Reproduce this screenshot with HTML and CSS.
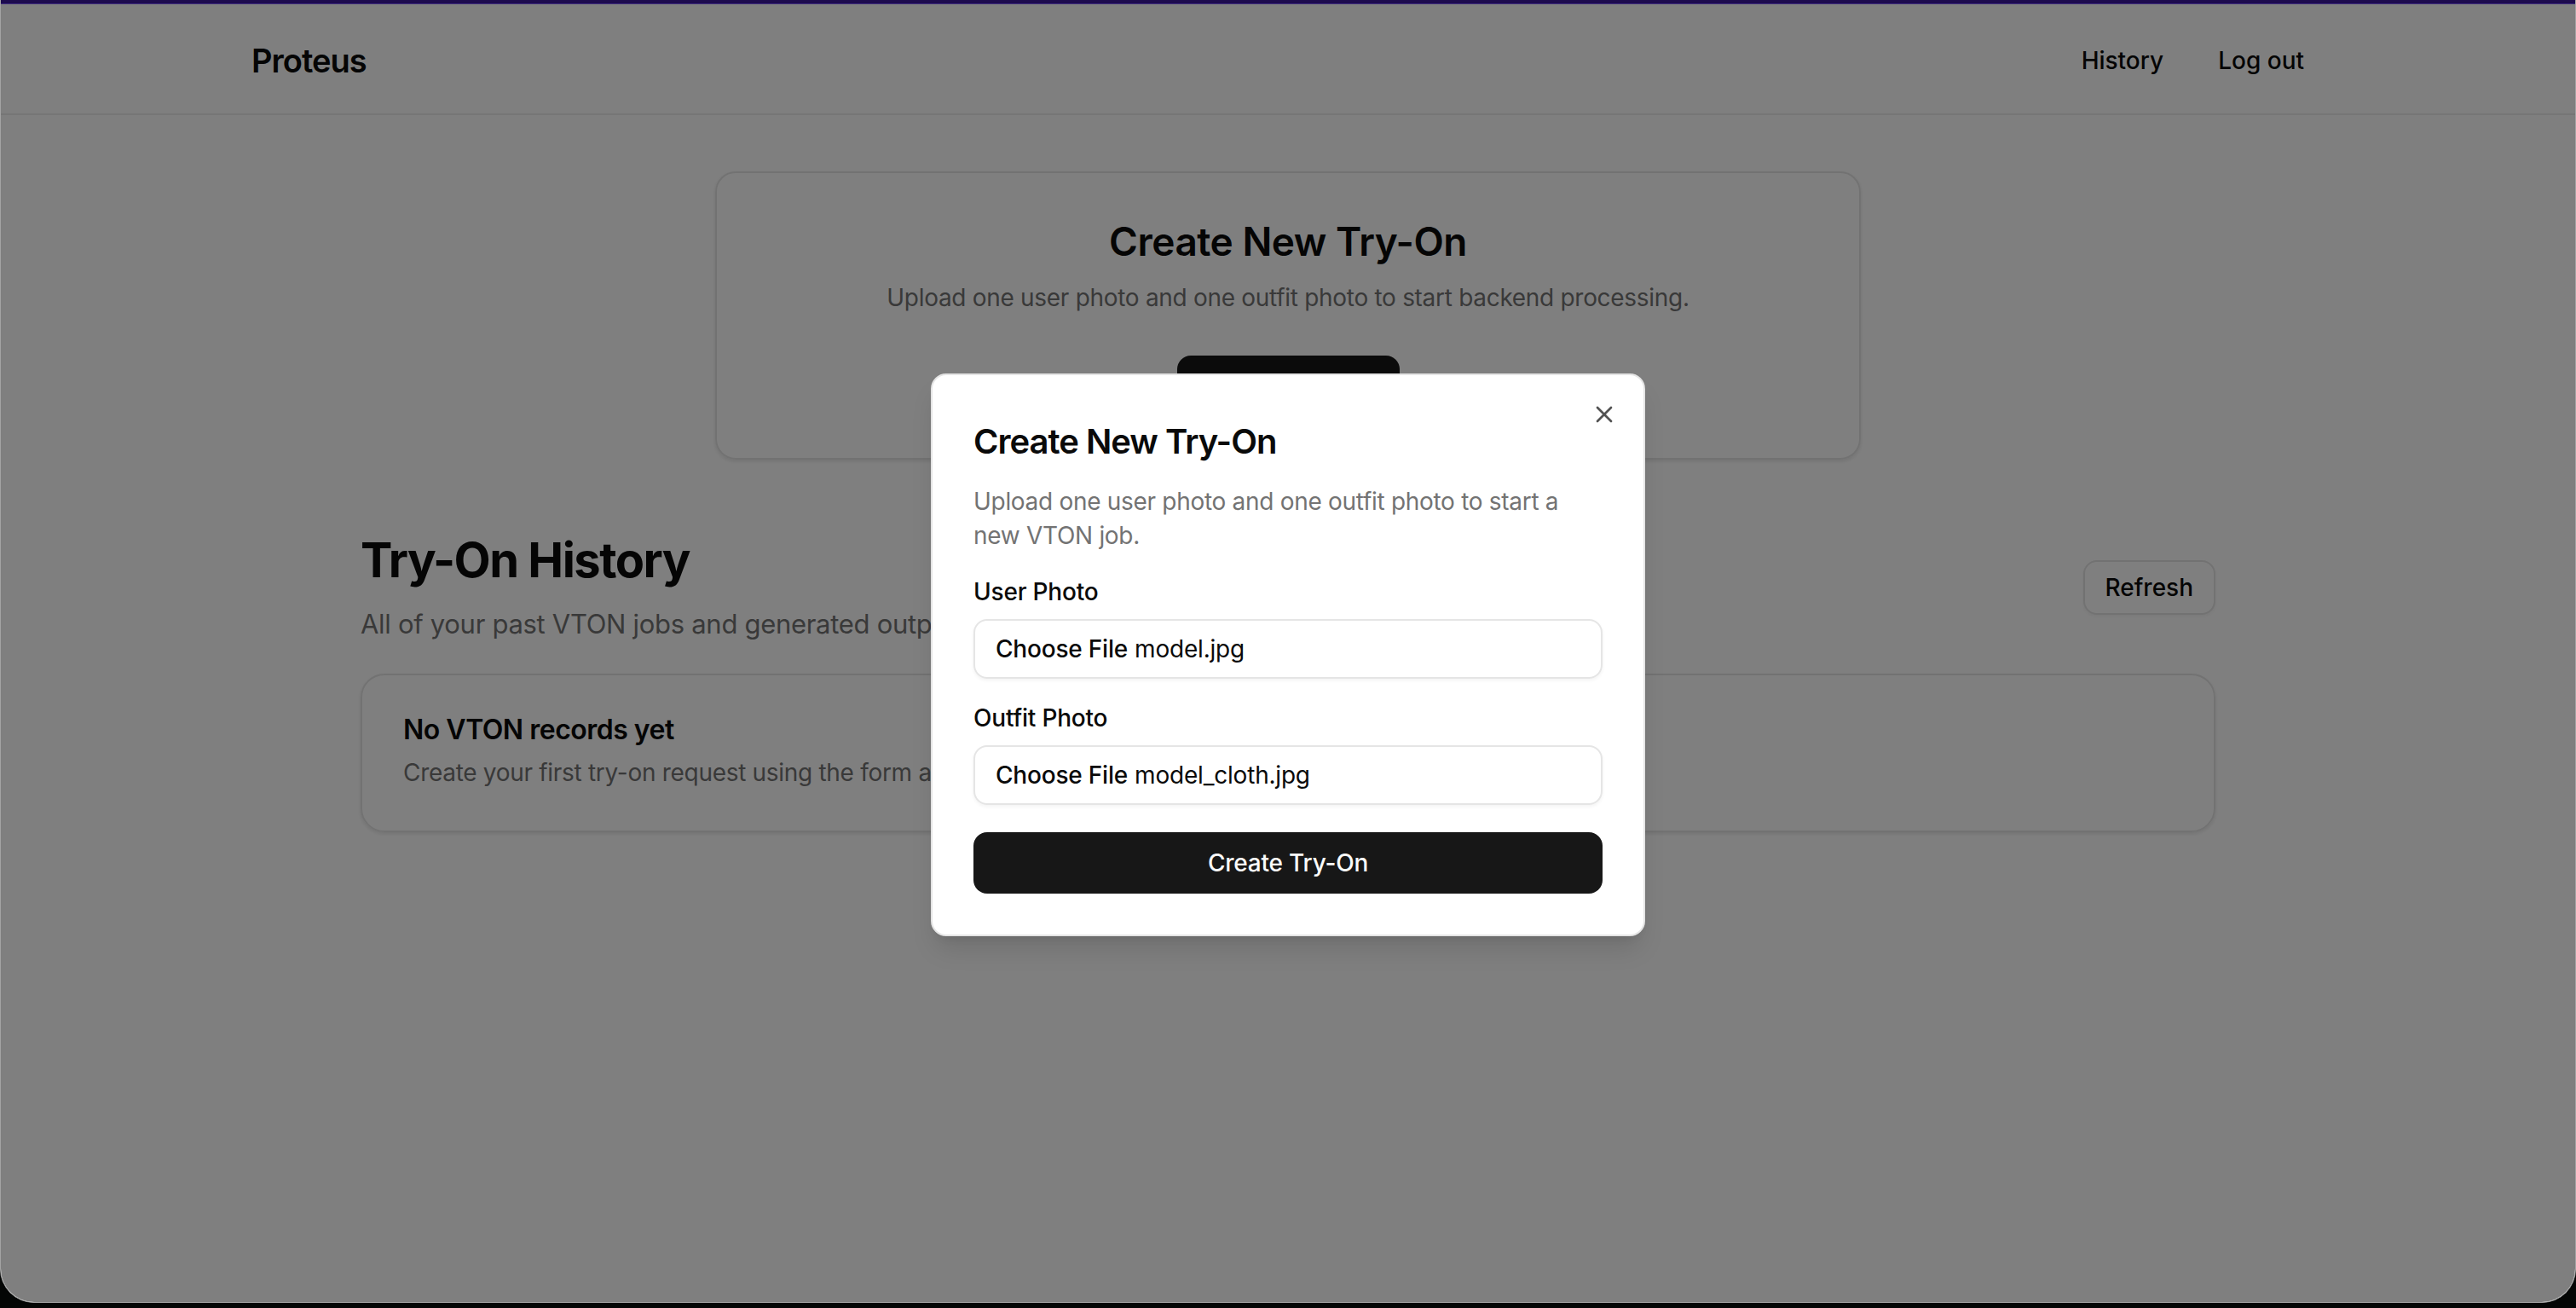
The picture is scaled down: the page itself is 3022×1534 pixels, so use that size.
FILE: index.html
```html
<!DOCTYPE html>
<html lang="en">
<head>
<meta charset="utf-8">
<title>Proteus</title>
<link rel="stylesheet" href="styles.css">
</head>
<body>
<div class="window">
  <div class="titlebar"></div>
  <div class="viewport">
    <header class="site-header">
      <div class="header-inner">
        <a class="logo" href="#">Proteus</a>
        <nav class="nav">
          <a class="nav-link" href="#">History</a>
          <a class="nav-link" href="#">Log out</a>
        </nav>
      </div>
    </header>

    <main class="main">
      <section class="create-card">
        <h1 class="create-title">Create New Try-On</h1>
        <p class="create-desc">Upload one user photo and one outfit photo to start backend processing.</p>
        <button class="btn-primary btn-open" type="button">Create Try-On</button>
      </section>

      <section class="history">
        <div class="history-head">
          <div class="history-heading">
            <h2 class="history-title">Try-On History</h2>
            <p class="history-desc">All of your past VTON jobs and generated outputs.</p>
          </div>
          <button class="btn-outline" type="button">Refresh</button>
        </div>
        <div class="empty-card">
          <h3 class="empty-title">No VTON records yet</h3>
          <p class="empty-desc">Create your first try-on request using the form above.</p>
        </div>
      </section>
    </main>

    <div class="overlay">
      <div class="dialog" role="dialog">
        <button class="dialog-close" type="button" aria-label="Close">
          <svg viewBox="0 0 24 24" width="32" height="32" fill="none" stroke="currentColor" stroke-width="2" stroke-linecap="round" stroke-linejoin="round"><path d="M18 6 6 18"/><path d="m6 6 12 12"/></svg>
        </button>
        <h2 class="dialog-title">Create New Try-On</h2>
        <p class="dialog-desc">Upload one user photo and one outfit photo to start a new VTON job.</p>
        <form class="dialog-form">
          <div class="field">
            <label class="field-label">User Photo</label>
            <div class="file-input"><span class="file-btn">Choose File</span><span class="file-name">model.jpg</span></div>
          </div>
          <div class="field">
            <label class="field-label">Outfit Photo</label>
            <div class="file-input"><span class="file-btn">Choose File</span><span class="file-name">model_cloth.jpg</span></div>
          </div>
          <button class="btn-primary btn-submit" type="button">Create Try-On</button>
        </form>
      </div>
    </div>
  </div>
</div>
</body>
</html>
```

FILE: styles.css
```css
* { box-sizing: border-box; margin: 0; padding: 0; }

html, body {
  width: 3022px;
  height: 1534px;
  overflow: hidden;
}

body {
  background: #040605;
  font-family: "Inter", "Liberation Sans", sans-serif;
  color: #0a0a0a;
  -webkit-font-smoothing: antialiased;
}

.window {
  width: 3022px;
  height: 1528px;
  display: flex;
  flex-direction: column;
  background: #ffffff;
  border: 1px solid #a3a3a3;
  border-top: 0;
  border-radius: 0 0 40px 40px;
  overflow: hidden;
}

.titlebar {
  height: 5px;
  flex: none;
  background: #1d0b4e;
  border-bottom: 1px solid #3e2b7c;
}

.viewport {
  position: relative;
  flex: 1;
  background: #ffffff;
}

/* header */
.site-header {
  height: 130px;
  border-bottom: 2px solid #ececec;
  background: #ffffff;
}

.header-inner {
  max-width: 2560px;
  height: 128px;
  margin: 0 auto;
  padding: 3px 64px 0;
  display: flex;
  align-items: center;
  justify-content: space-between;
}

.logo {
  font-size: 38px;
  font-weight: 600;
  letter-spacing: -1px;
  color: #0a0a0a;
  text-decoration: none;
}

.nav {
  display: flex;
  gap: 16px;
}

.nav-link {
  font-size: 28px;
  font-weight: 500;
  padding: 16px 24px;
  color: #0a0a0a;
  text-decoration: none;
}

/* main */
.main {
  padding-top: 66px;
}

.create-card {
  max-width: 1344px;
  margin: 0 auto;
  padding: 48px;
  border: 2px solid #e5e5e5;
  border-radius: 24px;
  box-shadow: 0 2px 4px rgba(0,0,0,0.06), 0 2px 6px rgba(0,0,0,0.05);
  text-align: center;
}

.create-title {
  font-size: 46px;
  line-height: 64px;
  font-weight: 600;
  letter-spacing: -0.5px;
}

.create-desc {
  margin-top: 14px;
  font-size: 28px;
  line-height: 40px;
  letter-spacing: -0.3px;
  color: #737373;
}

.btn-primary {
  display: inline-flex;
  align-items: center;
  justify-content: center;
  height: 72px;
  border: 0;
  border-radius: 16px;
  background: #171717;
  color: #fafafa;
  font-family: inherit;
  font-size: 28px;
  font-weight: 500;
  letter-spacing: -0.2px;
}

.btn-open {
  margin-top: 48px;
  width: 261px;
}

.history {
  max-width: 2176px;
  margin: 82px auto 0;
}

.history-head {
  display: flex;
  align-items: center;
  justify-content: space-between;
}

.history-title {
  font-size: 56px;
  line-height: 72px;
  font-weight: 700;
  letter-spacing: -1.5px;
}

.history-desc {
  margin-top: 15px;
  font-size: 31px;
  line-height: 48px;
  letter-spacing: -0.3px;
  color: #737373;
}

.btn-outline {
  height: 64px;
  padding: 0 24px;
  border: 2px solid #e5e5e5;
  border-radius: 16px;
  background: #ffffff;
  box-shadow: 0 2px 4px rgba(0,0,0,0.05);
  font-family: inherit;
  font-size: 28px;
  font-weight: 500;
  color: #0a0a0a;
}

.empty-card {
  margin-top: 34px;
  padding: 48px;
  border: 2px solid #e5e5e5;
  border-radius: 28px;
  box-shadow: 0 2px 4px rgba(0,0,0,0.06), 0 2px 6px rgba(0,0,0,0.05);
}

.empty-title {
  font-size: 32px;
  line-height: 32px;
  font-weight: 600;
  letter-spacing: -0.5px;
}

.empty-desc {
  margin-top: 14px;
  font-size: 28px;
  line-height: 40px;
  letter-spacing: -0.3px;
  color: #737373;
}

/* modal */
.overlay {
  position: absolute;
  inset: 0;
  padding-top: 4px;
  background: rgba(0, 0, 0, 0.5);
  display: flex;
  align-items: center;
  justify-content: center;
}

.dialog {
  position: relative;
  width: 838px;
  padding: 50px 48px 48px;
  background: #ffffff;
  border: 2px solid #e5e5e5;
  border-radius: 18px;
  box-shadow: 0 20px 30px -6px rgba(0,0,0,0.12), 0 8px 12px -8px rgba(0,0,0,0.12);
}

.dialog-close {
  position: absolute;
  top: 30px;
  right: 30px;
  width: 32px;
  height: 32px;
  border: 0;
  background: transparent;
  color: #0a0a0a;
  opacity: 0.7;
  display: flex;
}

.dialog-title {
  font-size: 40px;
  line-height: 56px;
  font-weight: 600;
  letter-spacing: -1px;
}

.dialog-desc {
  margin-top: 22px;
  font-size: 28px;
  line-height: 40px;
  letter-spacing: -0.3px;
  color: #737373;
}

.dialog-form {
  margin-top: 32px;
  display: flex;
  flex-direction: column;
  gap: 32px;
}

.field {
  display: flex;
  flex-direction: column;
  gap: 18px;
}

.field-label {
  font-size: 28px;
  line-height: 28px;
  font-weight: 500;
  letter-spacing: -0.2px;
}

.file-input {
  height: 70px;
  padding: 0 24px;
  border: 2px solid #e5e5e5;
  border-radius: 16px;
  box-shadow: 0 2px 4px rgba(0,0,0,0.05);
  display: flex;
  align-items: center;
  font-size: 28px;
  letter-spacing: -0.2px;
}

.file-btn {
  font-weight: 500;
  margin-right: 8px;
}

.file-name {
  font-weight: 400;
}

.btn-submit {
  width: 100%;
}
```
